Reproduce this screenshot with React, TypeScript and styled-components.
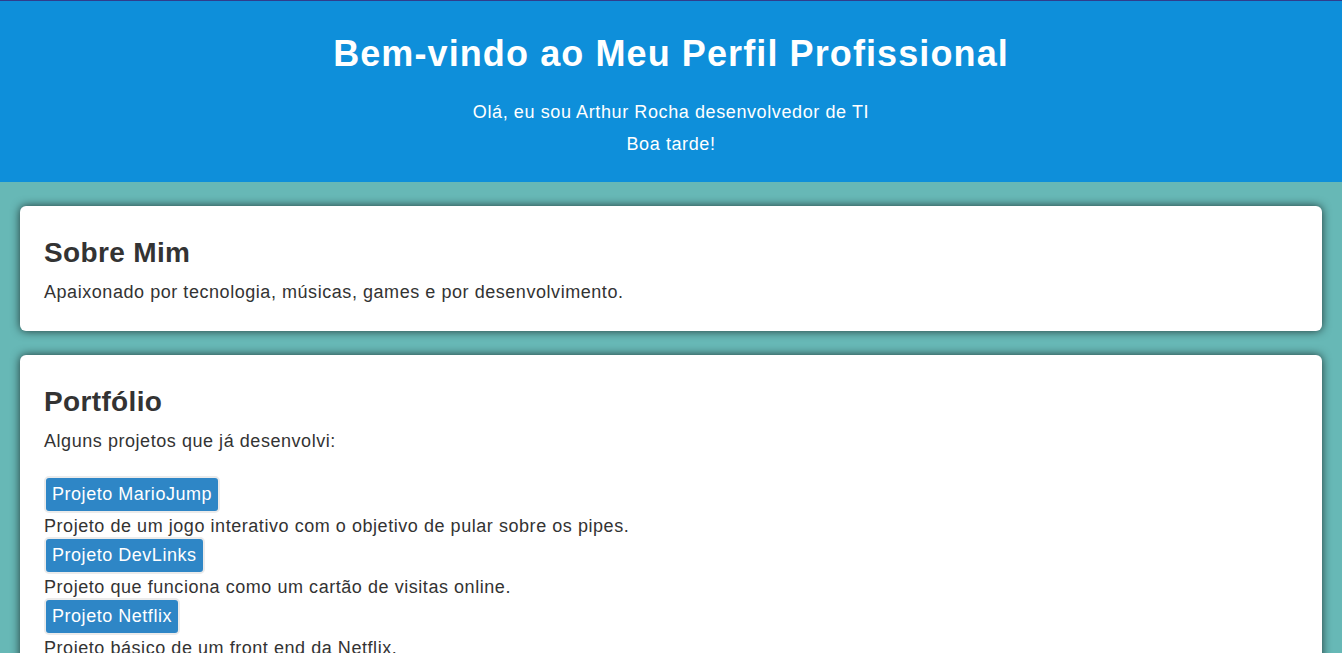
import React from "react";
import styled, { createGlobalStyle } from "styled-components";

const GlobalStyle = createGlobalStyle`
  html, body {
    margin: 0;
    padding: 0;
  }
  body {
    background: #67b8b6;
    font-family: "Liberation Sans", Arial, sans-serif;
    color: #333333;
  }
  * { box-sizing: border-box; }
`;

const Header = styled.header`
  background: #0e8fda;
  border-top: 1px solid #2f3d8c;
  padding: 32px 20px 27px;
  text-align: center;
  color: #ffffff;
`;

const Title = styled.h1`
  margin: 0;
  font-size: 36px;
  font-weight: bold;
  line-height: normal;
  letter-spacing: 1.1px;
`;

const Subtitle = styled.p<{ $top: number }>`
  margin: ${(p) => p.$top}px 0 0;
  font-size: 18px;
  line-height: 21px;
  letter-spacing: 0.6px;
`;

const Main = styled.main`
  display: flex;
  flex-direction: column;
  gap: 24px;
  padding: 24px 20px;
`;

const Card = styled.section`
  background: #ffffff;
  border-radius: 6px;
  box-shadow: 0 0 10px rgba(0, 0, 0, 0.7);
  padding: 31px 24px 28px;
`;

const SectionTitle = styled.h2`
  margin: 0 0 13px;
  font-size: 28px;
  font-weight: bold;
  line-height: normal;
  letter-spacing: 0.35px;
  color: #333333;
`;

const Text = styled.p<{ $bottom?: number }>`
  margin: 0 0 ${(p) => p.$bottom ?? 0}px;
  font-size: 18px;
  line-height: 21px;
  letter-spacing: 0.55px;
`;

const ProjectList = styled.div`
  display: flex;
  flex-direction: column;
  align-items: flex-start;
`;

const ProjectButton = styled.a`
  display: inline-block;
  background: #2e86c6;
  color: #ffffff;
  font-size: 18px;
  line-height: 21px;
  letter-spacing: 0.53px;
  padding: 6px 6px;
  border: 2px solid #ebebeb;
  border-radius: 5px;
  text-decoration: none;
  cursor: pointer;
`;

const ProjectDesc = styled.p`
  margin: 3px 0 0;
  font-size: 18px;
  line-height: 21px;
  letter-spacing: 0.55px;
`;

const projects = [
  {
    name: "Projeto MarioJump",
    desc: "Projeto de um jogo interativo com o objetivo de pular sobre os pipes.",
  },
  {
    name: "Projeto DevLinks",
    desc: "Projeto que funciona como um cartão de visitas online.",
  },
  {
    name: "Projeto Netflix",
    desc: "Projeto básico de um front end da Netflix.",
  },
];

export default function App() {
  return (
    <>
      <GlobalStyle />
      <Header>
        <Title>Bem-vindo ao Meu Perfil Profissional</Title>
        <Subtitle $top={27}>Olá, eu sou Arthur Rocha desenvolvedor de TI</Subtitle>
        <Subtitle $top={11}>Boa tarde!</Subtitle>
      </Header>
      <Main>
        <Card>
          <SectionTitle>Sobre Mim</SectionTitle>
          <Text>Apaixonado por tecnologia, músicas, games e por desenvolvimento.</Text>
        </Card>
        <Card>
          <SectionTitle>Portfólio</SectionTitle>
          <Text $bottom={24}>Alguns projetos que já desenvolvi:</Text>
          <ProjectList>
            {projects.map((p) => (
              <React.Fragment key={p.name}>
                <ProjectButton href="#">{p.name}</ProjectButton>
                <ProjectDesc>{p.desc}</ProjectDesc>
              </React.Fragment>
            ))}
          </ProjectList>
        </Card>
      </Main>
    </>
  );
}
